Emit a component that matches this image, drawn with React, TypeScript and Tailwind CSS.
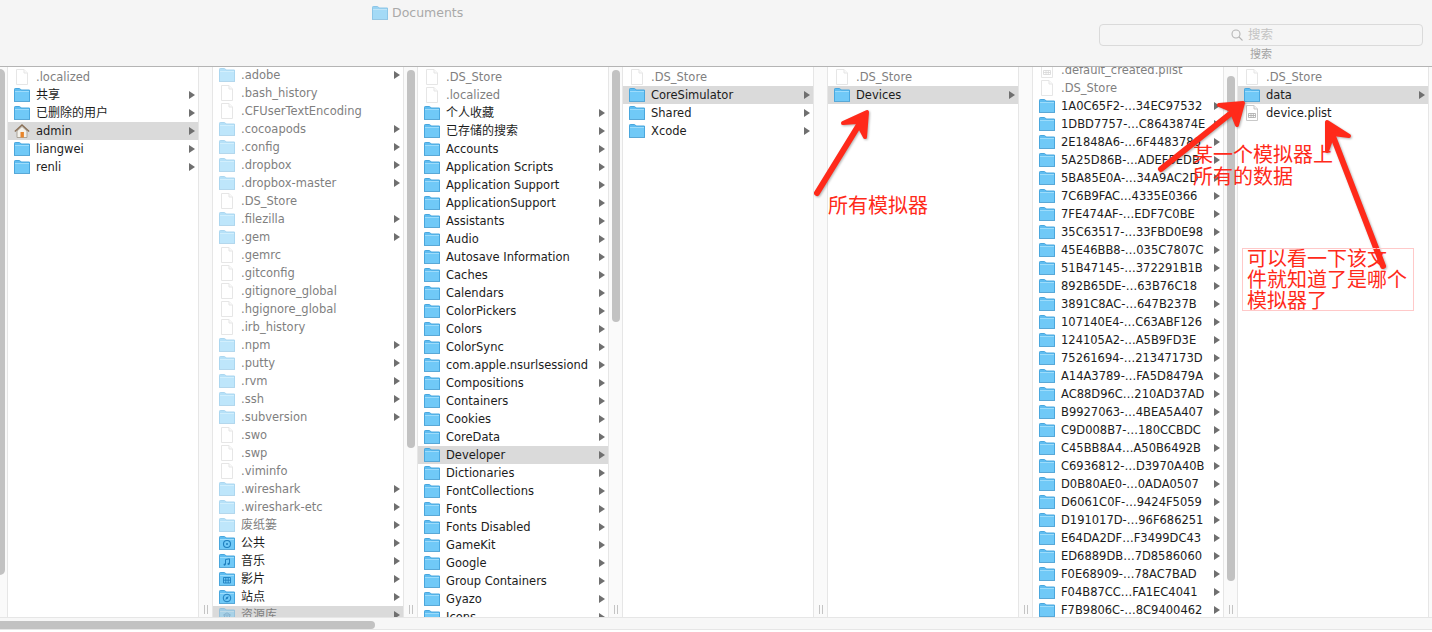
type Icon = "folder" | "file" | "plist" | "home" | "public" | "music" | "movies" | "sites" | "library";

type Item = { name: string; icon: Icon; dim?: boolean; arrow?: boolean; selected?: boolean };

const dir = (name: string, selected = false): Item => ({ name, icon: "folder", arrow: true, selected });
const hiddenDir = (name: string): Item => ({ name, icon: "folder", arrow: true, dim: true });
const hiddenFile = (name: string): Item => ({ name, icon: "file", dim: true });

const FolderShape = ({ children }: { children?: React.ReactNode }) => (
  <svg width="16" height="14" viewBox="0 0 16 14">
    <path d="M0.5 13.5V1.2Q0.5 0.5 1.2 0.5H5.4Q6 0.5 6.4 1L7.2 2H15.5V13.5Z" fill="#5fbdf1" stroke="#49a7de" />
    <rect x="1" y="3" width="14" height="10" fill="#70c9f7" />
    <rect x="1" y="3" width="14" height="1" fill="#9ddcfb" />
    <rect x="0" y="13" width="16" height="1" fill="#5aa8d6" />
    {children}
  </svg>
);

const RowIcon = ({ icon }: { icon: Icon }) => {
  if (icon === "file" || icon === "plist") {
    return (
      <svg width="16" height="16" viewBox="0 0 16 16">
        <path d="M2.5 0.5H10L13.5 4V15.5H2.5Z" fill="#fff" stroke="#c9c9c9" />
        <path d="M10 0.5V4H13.5" fill="#f3f3f3" stroke="#c9c9c9" />
        {icon === "plist" && (
          <path d="M4.5 8.5H11.5V12.5H4.5ZM4.5 10.5H11.5M7 8.5V12.5M9.3 8.5V12.5" fill="none" stroke="#a8a8a8" strokeWidth="0.8" />
        )}
      </svg>
    );
  }
  if (icon === "home") {
    return (
      <svg width="16" height="14" viewBox="0 0 16 14">
        <path d="M3 7V13.5H13V7L8 2.5Z" fill="#f4f1ea" stroke="#9d9488" strokeWidth="0.8" />
        <path d="M0.8 7.6L8 1L15.2 7.6" fill="none" stroke="#8a6f55" strokeWidth="1.3" />
        <rect x="6.5" y="8" width="3.4" height="5.5" fill="#e8852b" />
      </svg>
    );
  }
  if (icon === "public") {
    return (
      <FolderShape>
        <circle cx="8" cy="8" r="3.5" fill="none" stroke="#1f7fbe" strokeWidth="1.1" />
        <circle cx="8" cy="8" r="1" fill="#1f7fbe" />
      </FolderShape>
    );
  }
  if (icon === "music") {
    return (
      <FolderShape>
        <path d="M6.5 10.5V5.5L10.5 4.8V9.8" fill="none" stroke="#1f7fbe" strokeWidth="1" />
        <circle cx="5.6" cy="10.6" r="1.1" fill="#1f7fbe" />
        <circle cx="9.6" cy="9.9" r="1.1" fill="#1f7fbe" />
      </FolderShape>
    );
  }
  if (icon === "movies") {
    return (
      <FolderShape>
        <path d="M4.5 5.5H11.5V11H4.5ZM4.5 8.2H11.5M6.8 5.5V11M9.2 5.5V11" fill="none" stroke="#1f7fbe" strokeWidth="0.9" />
      </FolderShape>
    );
  }
  if (icon === "sites") {
    return (
      <FolderShape>
        <circle cx="8" cy="8" r="3.8" fill="none" stroke="#1f7fbe" strokeWidth="1" />
        <path d="M6.3 9.7L7.2 7.2L9.7 6.3L8.8 8.8Z" fill="#1f7fbe" />
      </FolderShape>
    );
  }
  if (icon === "library") {
    return (
      <FolderShape>
        <path d="M4.5 7L8 4.8L11.5 7ZM5.5 7.5V10.5M8 7.5V10.5M10.5 7.5V10.5M4.5 11H11.5" fill="none" stroke="#1f7fbe" strokeWidth="0.9" />
      </FolderShape>
    );
  }
  return <FolderShape />;
};

const Row = ({ item }: { item: Item }) => (
  <div className={`flex h-[18px] items-center pl-[6px] pr-[3px] ${item.selected ? "bg-[#dadada]" : ""}`}>
    <div className={`flex w-[16px] shrink-0 items-center justify-center ${item.dim ? "opacity-45" : ""}`}>
      <RowIcon icon={item.icon} />
    </div>
    <span
      className={`ml-[6px] flex-1 whitespace-nowrap ${/[\u4e00-\u9fff]/.test(item.name) ? "text-[12px]" : "pt-[2px] text-[11.5px]"} ${
        item.dim ? "text-[#7f7f7f]" : "text-[#1c1c1c]"
      }`}
    >
      {item.name}
    </span>
    {item.arrow && (
      <svg width="6" height="8" viewBox="0 0 6 8" className="shrink-0">
        <path d="M0 0L6 4L0 8Z" fill="#6f6f6f" />
      </svg>
    )}
  </div>
);

const Column = ({ items, listClass = "" }: { items: Item[]; listClass?: string }) => (
  <div className="w-[190px] shrink-0 overflow-hidden bg-white pt-[1px]">
    <div className={listClass}>
      {items.map((item) => (
        <Row key={item.name} item={item} />
      ))}
    </div>
  </div>
);

const Gutter = ({ thumbClass }: { thumbClass?: string }) => (
  <div className="flex w-[15px] shrink-0 flex-col border-x border-[#e6e6e6] bg-[#fafafa]">
    {thumbClass && <div className={`mx-auto w-[8px] rounded-full bg-[#c2c2c2] ${thumbClass}`} />}
    <div className="mt-auto mb-[3px] flex h-[9px] justify-center gap-[2px]">
      <div className="w-px bg-[#c4c4c4]" />
      <div className="w-px bg-[#c4c4c4]" />
    </div>
  </div>
);

const usersList: Item[] = [
  hiddenFile(".localized"),
  dir("共享"),
  dir("已删除的用户"),
  { name: "admin", icon: "home", arrow: true, selected: true },
  dir("liangwei"),
  dir("renli"),
];

const homeList: Item[] = [
  hiddenDir(".adobe"),
  hiddenFile(".bash_history"),
  hiddenFile(".CFUserTextEncoding"),
  hiddenDir(".cocoapods"),
  hiddenDir(".config"),
  hiddenDir(".dropbox"),
  hiddenDir(".dropbox-master"),
  hiddenFile(".DS_Store"),
  hiddenDir(".filezilla"),
  hiddenDir(".gem"),
  hiddenFile(".gemrc"),
  hiddenFile(".gitconfig"),
  hiddenFile(".gitignore_global"),
  hiddenFile(".hgignore_global"),
  hiddenFile(".irb_history"),
  hiddenDir(".npm"),
  hiddenDir(".putty"),
  hiddenDir(".rvm"),
  hiddenDir(".ssh"),
  hiddenDir(".subversion"),
  hiddenFile(".swo"),
  hiddenFile(".swp"),
  hiddenFile(".viminfo"),
  hiddenDir(".wireshark"),
  hiddenDir(".wireshark-etc"),
  hiddenDir("废纸篓"),
  { name: "公共", icon: "public", arrow: true },
  { name: "音乐", icon: "music", arrow: true },
  { name: "影片", icon: "movies", arrow: true },
  { name: "站点", icon: "sites", arrow: true },
  { name: "资源库", icon: "library", arrow: true, dim: true, selected: true },
];

const libraryList: Item[] = [
  hiddenFile(".DS_Store"),
  hiddenFile(".localized"),
  ...[
    "个人收藏",
    "已存储的搜索",
    "Accounts",
    "Application Scripts",
    "Application Support",
    "ApplicationSupport",
    "Assistants",
    "Audio",
    "Autosave Information",
    "Caches",
    "Calendars",
    "ColorPickers",
    "Colors",
    "ColorSync",
    "com.apple.nsurlsessiond",
    "Compositions",
    "Containers",
    "Cookies",
    "CoreData",
  ].map((name) => dir(name)),
  dir("Developer", true),
  ...[
    "Dictionaries",
    "FontCollections",
    "Fonts",
    "Fonts Disabled",
    "GameKit",
    "Google",
    "Group Containers",
    "Gyazo",
    "Icons",
  ].map((name) => dir(name)),
];

const developerList: Item[] = [hiddenFile(".DS_Store"), dir("CoreSimulator", true), dir("Shared"), dir("Xcode")];

const simulatorList: Item[] = [hiddenFile(".DS_Store"), dir("Devices", true)];

const devicesList: Item[] = [
  { name: ".default_created.plist", icon: "plist", dim: true },
  hiddenFile(".DS_Store"),
  ...[
    "1A0C65F2-…34EC97532",
    "1DBD7757-…C8643874E",
    "2E1848A6-…6F4483786",
    "5A25D86B-…ADEF5EDB",
    "5BA85E0A-…34A9AC2D",
    "7C6B9FAC…4335E0366",
    "7FE474AF-…EDF7C0BE",
    "35C63517-…33FBD0E98",
    "45E46BB8-…035C7807C",
    "51B47145-…372291B1B",
    "892B65DE-…63B76C18",
    "3891C8AC-…647B237B",
    "107140E4-…C63ABF126",
    "124105A2-…A5B9FD3E",
    "75261694-…21347173D",
    "A14A3789-…FA5D8479A",
    "AC88D96C…210AD37AD",
    "B9927063-…4BEA5A407",
    "C9D008B7-…180CCBDC",
    "C45BB8A4…A50B6492B",
    "C6936812-…D3970A40B",
    "D0B80AE0-…0ADA0507",
    "D6061C0F-…9424F5059",
    "D191017D-…96F686251",
    "E64DA2DF…F3499DC43",
    "ED6889DB…7D8586060",
    "F0E68909-…78AC7BAD",
    "F04B87CC…FA1EC4041",
    "F7B9806C-…8C9400462",
  ].map((name) => dir(name)),
];

const deviceList: Item[] = [
  hiddenFile(".DS_Store"),
  dir("data", true),
  { name: "device.plist", icon: "plist" },
];

const Annotations = () => (
  <>
    <svg
      className="pointer-events-none absolute inset-0 drop-shadow-[1px_1px_1px_rgba(0,0,0,0.3)]"
      width="1432"
      height="632"
      viewBox="0 0 1432 632"
    >
      <g fill="#ff2a1a" stroke="#ff2a1a" strokeLinecap="round" strokeLinejoin="round">
        <path d="M817 193L865 115" strokeWidth="6" />
        <path d="M843 123L867 112L865 137L857 122Z" strokeWidth="4" />
        <path d="M1161 169L1240 106" strokeWidth="6" />
        <path d="M1219 105L1243 103L1237 125L1231 110Z" strokeWidth="4" />
        <path d="M1383 266L1329 126" strokeWidth="6" />
        <path d="M1349 136L1327 122L1327 151L1333 134Z" strokeWidth="4" />
      </g>
    </svg>
    <div className="absolute left-[828px] top-[194px] text-[20px] leading-[24px] text-[#ff2a1a]">所有模拟器</div>
    <div className="absolute left-[1193px] top-[144px] w-[150px] text-[20px] leading-[22px] text-[#ff2a1a]">
      某一个模拟器上
      <br />
      所有的数据
    </div>
    <div className="absolute left-[1242px] top-[248px] h-[63px] w-[172px] border border-[#ffc9c9] pl-[4px] text-[20px] leading-[21px] text-[#ff2a1a]">
      可以看一下该文
      <br />
      件就知道了是哪个
      <br />
      模拟器了
    </div>
  </>
);

export default function App() {
  return (
    <div className="relative flex h-[632px] w-[1432px] flex-col overflow-hidden bg-white font-['DejaVu_Sans','Noto_Sans_CJK_SC',sans-serif] text-[12px]">
      {/* toolbar */}
      <div className="flex h-[67px] shrink-0 items-start justify-between border-b border-[#b4b4b4] bg-[#f5f5f5]">
        <div className="ml-[372px] mt-[3px] flex items-center gap-[4px] text-[12.5px] text-[#a9a9a9]">
          <div className="opacity-60">
            <FolderShape />
          </div>
          <span className="pt-[1px]">Documents</span>
        </div>
        <div className="mr-[9px] mt-[24px] w-[324px]">
          <div className="flex h-[22px] items-center justify-center gap-[5px] rounded-[4px] border border-[#dadada] pr-[18px] text-[12.5px] text-[#c4c4c4]">
            <svg width="12" height="12" viewBox="0 0 12 12" fill="none" stroke="#b5b5b5" strokeWidth="1.1">
              <circle cx="5" cy="5" r="4" />
              <path d="M8 8L11.5 11.5" />
            </svg>
            搜索
          </div>
          <div className="mt-[2px] text-center text-[11px] leading-[14px] text-[#a3a3a3]">搜索</div>
        </div>
      </div>

      {/* browser columns */}
      <div className="flex h-[550px] shrink-0 overflow-hidden bg-[#fafafa]">
        <div className="w-[8px] shrink-0 border-r border-[#e6e6e6]">
          <div className="mt-[2px] h-[506px] w-[5px] rounded-r-full bg-[#c2c2c2]" />
        </div>
        <Column items={usersList} />
        <Gutter />
        <Column items={homeList} listClass="-mt-[2px]" />
        <Gutter thumbClass="mt-[3px] h-[378px]" />
        <Column items={libraryList} />
        <Gutter thumbClass="mt-[3px] h-[252px]" />
        <Column items={developerList} />
        <Gutter />
        <Column items={simulatorList} />
        <Gutter />
        <Column items={devicesList} listClass="-mt-[7px]" />
        <Gutter thumbClass="mt-[9px] h-[505px]" />
        <Column items={deviceList} />
        <div className="w-[4px] shrink-0 border-l border-[#e6e6e6]" />
      </div>

      {/* horizontal scroll bar */}
      <div className="h-[13px] shrink-0 border-y border-[#e6e6e6] bg-[#f7f7f7] pt-[3px]">
        <div className="h-[8px] w-[375px] rounded-r-full bg-[#c2c2c2]" />
      </div>

      <Annotations />
    </div>
  );
}
